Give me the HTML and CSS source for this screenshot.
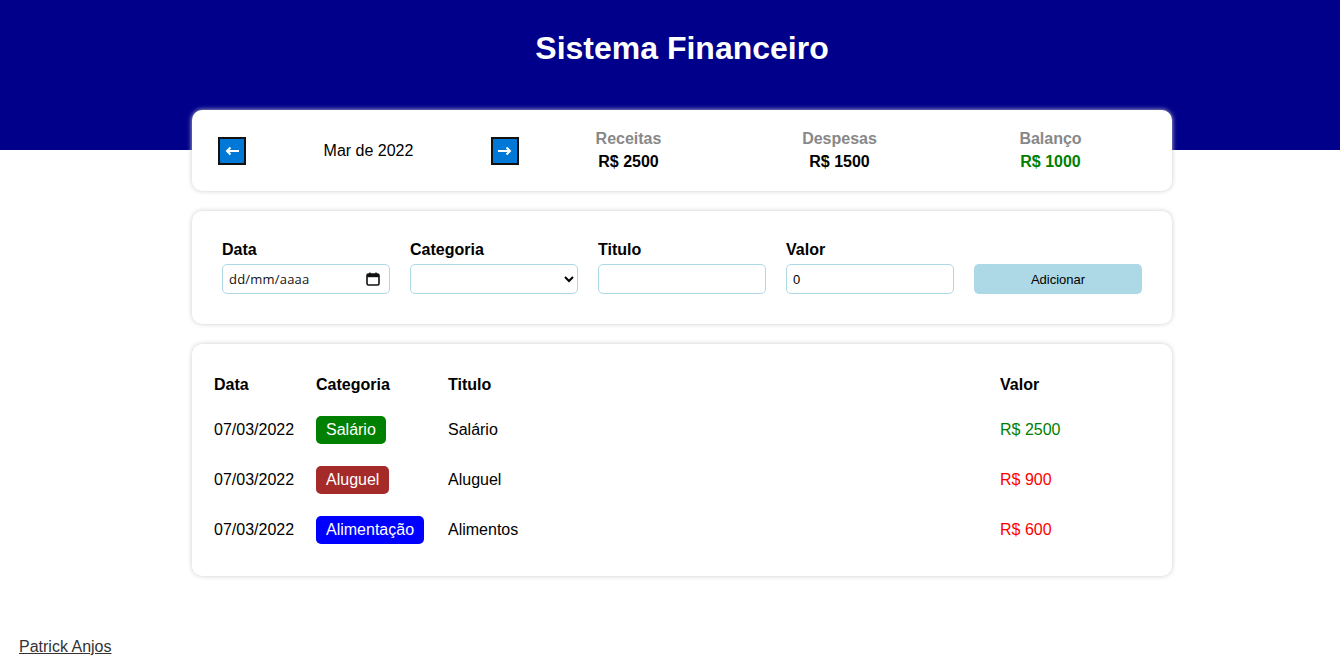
FILE: index.html
```html
<!DOCTYPE html>
<html lang="pt-BR">
<head>
<meta charset="utf-8">
<title>Sistema Financeiro</title>
<link rel="stylesheet" href="styles.css">
</head>
<body>
<header class="header">
  <h1 class="title">Sistema Financeiro</h1>
</header>
<main class="body">
  <section class="card info">
    <div class="month">
      <button class="arrow" type="button" aria-label="Mês anterior">
        <svg width="14" height="10" viewBox="0 0 14 10"><path d="M14 5H2M5.5 1.5L2 5l3.5 3.5" fill="none" stroke="#fff" stroke-width="2"/></svg>
      </button>
      <div class="month-title">Mar de 2022</div>
      <button class="arrow" type="button" aria-label="Próximo mês">
        <svg width="14" height="10" viewBox="0 0 14 10"><path d="M0 5h12M8.5 1.5L12 5 8.5 8.5" fill="none" stroke="#fff" stroke-width="2"/></svg>
      </button>
    </div>
    <div class="resume">
      <div class="resume-item">
        <div class="resume-label">Receitas</div>
        <div class="resume-value">R$ 2500</div>
      </div>
      <div class="resume-item">
        <div class="resume-label">Despesas</div>
        <div class="resume-value">R$ 1500</div>
      </div>
      <div class="resume-item">
        <div class="resume-label">Balanço</div>
        <div class="resume-value green">R$ 1000</div>
      </div>
    </div>
  </section>

  <section class="card form">
    <label class="field">
      <span class="field-label">Data</span>
      <span class="date-wrap">
        <input class="input date-input" type="text" placeholder="dd/mm/aaaa">
        <svg class="cal" width="14" height="14" viewBox="0 0 14 14"><rect x="1" y="2" width="12" height="11" rx="1.5" fill="none" stroke="#111" stroke-width="1.6"/><rect x="1" y="2" width="12" height="3.2" fill="#111"/><path d="M4 0.5v2.5M10 0.5v2.5" stroke="#111" stroke-width="1.4"/></svg>
      </span>
    </label>
    <label class="field">
      <span class="field-label">Categoria</span>
      <select class="input">
        <option></option>
        <option>Alimentação</option>
        <option>Aluguel</option>
        <option>Salário</option>
      </select>
    </label>
    <label class="field">
      <span class="field-label">Titulo</span>
      <input class="input" type="text">
    </label>
    <label class="field">
      <span class="field-label">Valor</span>
      <input class="input" type="number" value="0">
    </label>
    <div class="field">
      <span class="field-label">&nbsp;</span>
      <button class="add" type="button">Adicionar</button>
    </div>
  </section>

  <section class="card list">
    <table class="table">
      <colgroup>
        <col class="c-date">
        <col class="c-cat">
        <col>
        <col class="c-val">
      </colgroup>
      <thead>
        <tr>
          <th>Data</th>
          <th>Categoria</th>
          <th>Titulo</th>
          <th>Valor</th>
        </tr>
      </thead>
      <tbody>
        <tr>
          <td>07/03/2022</td>
          <td><span class="tag tag-green">Salário</span></td>
          <td>Salário</td>
          <td class="green">R$ 2500</td>
        </tr>
        <tr>
          <td>07/03/2022</td>
          <td><span class="tag tag-brown">Aluguel</span></td>
          <td>Aluguel</td>
          <td class="red">R$ 900</td>
        </tr>
        <tr>
          <td>07/03/2022</td>
          <td><span class="tag tag-blue">Alimentação</span></td>
          <td>Alimentos</td>
          <td class="red">R$ 600</td>
        </tr>
      </tbody>
    </table>
  </section>
</main>
<footer class="footer">
  <a class="footer-link" href="#">Patrick Anjos</a>
</footer>
</body>
</html>
```

FILE: styles.css
```css
* { box-sizing: border-box; }

html, body {
  margin: 0;
  padding: 0;
}

body {
  font-family: "Liberation Sans", Arial, sans-serif;
  font-size: 16px;
  color: #000;
  background: #fff;
}

.header {
  background: #00008b;
  height: 150px;
  padding: 30px 0 0 24px;
  text-align: center;
}

.title {
  margin: 0;
  color: #fff;
  font-size: 32px;
  line-height: 37px;
  font-weight: bold;
}

.body {
  width: 980px;
  margin: -40px 0 0 192px;
  display: flex;
  flex-direction: column;
  gap: 20px;
}

.card {
  background: #fff;
  border-radius: 10px;
  box-shadow: 0 0 5px #ccc;
}

/* info card */
.info {
  height: 81px;
  display: flex;
  align-items: center;
  padding: 0 16px 0 26px;
}

.month {
  width: 301px;
  display: flex;
  align-items: center;
}

.arrow {
  width: 28px;
  height: 28px;
  padding: 0;
  background: #0078d7;
  border: 2px solid #111;
  display: flex;
  align-items: center;
  justify-content: center;
  cursor: pointer;
}

.arrow svg { display: block; }

.month-title {
  flex: 1;
  text-align: center;
  font-size: 16px;
}

.resume {
  flex: 1;
  display: grid;
  grid-template-columns: repeat(3, 1fr);
  margin-left: 4px;
  margin-top: -1px;
}

.resume-item {
  text-align: center;
}

.resume-label {
  color: #888;
  font-weight: bold;
  font-size: 16px;
  line-height: 19px;
  margin-bottom: 4px;
}

.resume-value {
  font-weight: bold;
  font-size: 16px;
  line-height: 19px;
}

.green { color: #008000; }
.red { color: #ff0000; }

/* form */
.form {
  display: flex;
  gap: 20px;
  padding: 30px;
}

.field {
  display: flex;
  flex-direction: column;
  width: 168px;
}

.field-label {
  font-weight: bold;
  font-size: 16px;
  line-height: 18px;
  margin-bottom: 5px;
}

.input {
  width: 168px;
  height: 30px;
  padding: 0 6px;
  border: 1px solid #add8e6;
  border-radius: 5px;
  background: #fff;
  font-family: "Liberation Sans", Arial, sans-serif;
  font-size: 13px;
  color: #000;
}

.date-wrap {
  position: relative;
  display: block;
}

.date-input::placeholder {
  color: #111;
  font-family: "Open Sans", "Liberation Sans", sans-serif;
  letter-spacing: 0.2px;
}

.cal {
  position: absolute;
  left: 144px;
  top: 8px;
  pointer-events: none;
}

.add {
  width: 168px;
  height: 30px;
  border: 0;
  border-radius: 5px;
  background: #add8e6;
  font-family: "Liberation Sans", Arial, sans-serif;
  font-size: 13px;
  color: #000;
  cursor: pointer;
}

/* table */
.list {
  padding: 21px 20px 21px;
}

.table {
  width: 100%;
  table-layout: fixed;
  border-collapse: collapse;
}

.c-date { width: 102px; }
.c-cat { width: 132px; }
.c-val { width: 154px; }

.table th {
  height: 40px;
  text-align: left;
  font-weight: bold;
  padding: 0 0 0 2px;
}

.table td {
  height: 50px;
  padding: 0 0 0 2px;
  vertical-align: middle;
}

.tag {
  display: inline-block;
  padding: 0 10px;
  height: 28px;
  line-height: 28px;
  border-radius: 5px;
  color: #fff;
}

.tag-green { background: #008000; }
.tag-brown { background: #a52a2a; }
.tag-blue { background: #0000ff; }

/* footer */
.footer {
  margin-top: 62px;
  padding-left: 19px;
}

.footer-link {
  color: #333;
  text-decoration: underline;
  font-size: 16px;
}
```
